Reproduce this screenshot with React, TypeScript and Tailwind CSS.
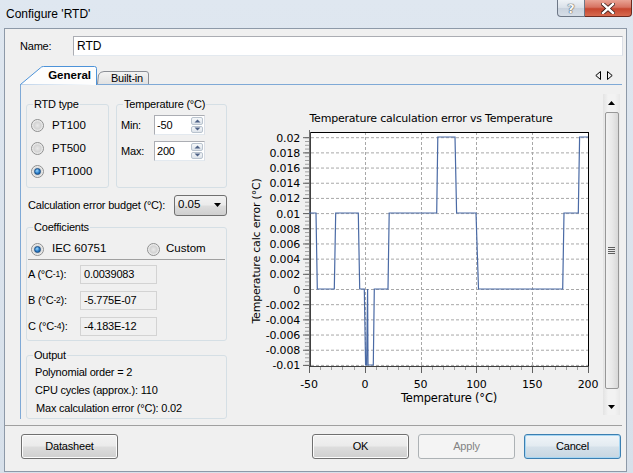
import React from "react";

const UI = { fontFamily: '"Liberation Sans", Arial, sans-serif' };
const CH = '"DejaVu Sans", Verdana, sans-serif';

function Radio({ checked }: { checked?: boolean }) {
  return (
    <span className="inline-flex w-[13px] h-[13px] shrink-0 items-center justify-center rounded-full border border-[#8e8f8f] bg-[radial-gradient(circle_at_50%_50%,#e9e9e9_0%,#d3d3d3_45%,#f6f6f6_75%)]">
      {checked && (
        <span className="w-[7px] h-[7px] rounded-full border border-[#1a4f86] bg-[radial-gradient(circle_at_40%_35%,#9ad8ff_0%,#2a7cc8_55%,#0e4d8c_100%)]" />
      )}
    </span>
  );
}

function SpinBtn({ up }: { up?: boolean }) {
  return (
    <div className="flex-1 flex items-center justify-center rounded-[2px] border border-[#b9c3ce] bg-gradient-to-b from-[#f6f8fa] to-[#dde3ea]">
      <svg width="7" height="4" viewBox="0 0 7 4">
        {up ? <path d="M0.5 3.5 L3.5 0.5 L6.5 3.5 Z" fill="#4d6185" /> : <path d="M0.5 0.5 L3.5 3.5 L6.5 0.5 Z" fill="#4d6185" />}
      </svg>
    </div>
  );
}

function Spin({ value }: { value: string }) {
  return (
    <div className="flex w-[51px] h-[20px] border border-[#abadb3] border-b-[#e3e9ef] border-r-[#dbdfe6] bg-white">
      <span className="flex-1 pl-[2px] leading-[18px]">{value}</span>
      <div className="w-[14px] flex flex-col gap-[1px] p-[1px]">
        <SpinBtn up />
        <SpinBtn />
      </div>
    </div>
  );
}

function ReadBox({ value }: { value: string }) {
  return (
    <div className="w-[77px] h-[19px] border border-[#d3d3d3] bg-[#f0f0f0] pl-[3px] leading-[17px]">{value}</div>
  );
}

function Btn({ label, disabled, def }: { label: string; disabled?: boolean; def?: boolean }) {
  const base = "w-[97px] h-[25px] rounded-[3px] border flex items-center justify-center";
  if (disabled)
    return <div className={base + " border-[#adb2b5] bg-[#f4f4f4] text-[#838383]"}>{label}</div>;
  if (def)
    return (
      <div className={base + " border-[#3c7fb1] bg-[linear-gradient(to_bottom,#f0f5f9_0%,#e3ebf1_48%,#d5e1ea_52%,#c8d6e1_100%)] shadow-[inset_0_0_0_1px_#a6d6f3]"}>
        {label}
      </div>
    );
  return (
    <div className={base + " border-[#707070] bg-[linear-gradient(to_bottom,#f2f2f2_0%,#ebebeb_48%,#dddddd_52%,#cfcfcf_100%)] shadow-[inset_0_0_0_1px_#fcfcfc]"}>
      {label}
    </div>
  );
}

function Group({ title, className, children }: { title: string; className?: string; children: React.ReactNode }) {
  return (
    <fieldset className={"border border-[#d5dfe5] rounded-[3px] " + (className || "")}>
      <legend className="ml-[6px] px-[1px] leading-[13px]">{title}</legend>
      {children}
    </fieldset>
  );
}

// chart helpers (page coords)
const X = (t: number) => 309 + (t + 50) * 1.116;
const Y = (v: number) => 290 - v * 7590;

function Chart() {
  const yTicks: number[] = [];
  for (let k = 0; k <= 15; k++) yTicks.push(0.02 - k * 0.002);
  const minorY: number[] = [];
  for (let k = 0; k <= 60; k++) minorY.push(0.02 - k * 0.0005);
  const xMajor = [-50, 0, 50, 100, 150, 200];
  const minorX: number[] = [];
  for (let t = -50; t <= 200; t += 10) minorX.push(t);
  const fmt = (v: number) => {
    const r = Math.round(v * 1000) / 1000;
    if (Math.abs(r) < 1e-9) return "0";
    return r.toString();
  };
  const pts: [number, number][] = [
    [309, 214], [316, 214], [317.3, 290], [334.3, 290], [335.7, 214], [358.3, 214], [359.7, 290],
    [364.3, 290], [365.6, 366], [366.6, 366], [367.6, 290], [368, 366], [373.3, 366], [374.3, 290],
    [388, 290], [389.2, 214], [436.7, 214], [437.8, 138], [455, 138], [456.6, 214], [476, 214],
    [478.5, 290], [562.7, 290], [564, 214], [578.3, 214], [579.6, 138], [588, 138],
  ];
  return (
    <svg width="364" height="322" viewBox="236 95 364 322" className="block">
      <text x="431" y="123" textAnchor="middle" fontFamily={CH} fontSize="11" fill="#000">
        Temperature calculation error vs Temperature
      </text>
      <rect x="309" y="133" width="279" height="234" fill="#fff" />
      {yTicks.map((v, i) => (
        <line key={"gy" + i} x1="311" x2="588" y1={Y(v) + 0.5} y2={Y(v) + 0.5} stroke="#a8a8a8" strokeDasharray="3 2" strokeWidth="1" />
      ))}
      {[0, 50, 100, 150].map((t) => (
        <line key={"gx" + t} x1={Math.round(X(t)) + 0.5} x2={Math.round(X(t)) + 0.5} y1="133" y2="367" stroke="#a8a8a8" strokeDasharray="3 2" strokeWidth="1" />
      ))}
      <line x1="309" x2="588.5" y1="133.5" y2="133.5" stroke="#000" />
      <line x1="588.5" x2="588.5" y1="133" y2="367" stroke="#000" />
      {minorY.map((v, i) => (
        <line key={"my" + i} x1="305" x2="309" y1={Y(v) + 0.5} y2={Y(v) + 0.5} stroke="#a0a0a0" />
      ))}
      {yTicks.map((v, i) => (
        <line key={"ty" + i} x1="303" x2="309" y1={Y(v) + 0.5} y2={Y(v) + 0.5} stroke="#606060" />
      ))}
      <line x1="309.5" x2="309.5" y1="131" y2="368" stroke="#707070" strokeWidth="1" />
      <line x1="310.5" x2="310.5" y1="133" y2="367" stroke="#404040" strokeWidth="1" />
      {minorX.map((t) => (
        <line key={"mx" + t} x1={Math.round(X(t)) + 0.5} x2={Math.round(X(t)) + 0.5} y1="368" y2="371" stroke="#a0a0a0" />
      ))}
      {xMajor.map((t) => (
        <line key={"tx" + t} x1={Math.round(X(t)) + 0.5} x2={Math.round(X(t)) + 0.5} y1="368" y2="374" stroke="#606060" />
      ))}
      <line x1="309" x2="589" y1="367.5" y2="367.5" stroke="#404040" />
      <polyline points={pts.map((p) => p.join(",")).join(" ")} fill="none" stroke="#4a6aa5" strokeWidth="1.2" />
      {yTicks.map((v, i) => (
        <text key={"ly" + i} x="300" y={Y(v) + 4.5} textAnchor="end" fontFamily={CH} fontSize="11" fill="#000">
          {fmt(v)}
        </text>
      ))}
      {xMajor.map((t) => (
        <text key={"lx" + t} x={X(t)} y="389" textAnchor="middle" fontFamily={CH} fontSize="11" fill="#000">
          {t}
        </text>
      ))}
      <text x="449" y="403" textAnchor="middle" fontFamily={CH} fontSize="11.5" fill="#000">
        Temperature (°C)
      </text>
      <text transform="translate(260 252) rotate(-90)" textAnchor="middle" fontFamily={CH} fontSize="11" fill="#000">
        Temperature calc error (°C)
      </text>
    </svg>
  );
}

function Scrollbar() {
  return (
    <div className="w-[17px] h-[321px] bg-[linear-gradient(to_right,#e3e3e3,#f2f2f2_30%,#f2f2f2_70%,#e8e8e8)] flex flex-col items-center">
      <div className="h-[17px] w-full flex items-center justify-center">
        <svg width="7" height="4" viewBox="0 0 7 4"><path d="M0 4 L3.5 0 L7 4 Z" fill="#000" /></svg>
      </div>
      <div className="mt-[1px] w-[14px] h-[277px] rounded-[2px] border border-[#979797] bg-[linear-gradient(to_right,#f2f2f2,#e9e9e9_50%,#d8d8d8)] flex items-center justify-center">
        <div className="flex flex-col gap-[1px]">
          <div className="w-[7px] h-[1px] bg-[#5e5e5e]" />
          <div className="w-[7px] h-[1px] bg-[#5e5e5e]" />
          <div className="w-[7px] h-[1px] bg-[#5e5e5e]" />
          <div className="w-[7px] h-[1px] bg-[#5e5e5e]" />
        </div>
      </div>
      <div className="mt-auto h-[17px] w-full flex items-center justify-center">
        <svg width="7" height="4" viewBox="0 0 7 4"><path d="M0 0 L3.5 4 L7 0 Z" fill="#000" /></svg>
      </div>
    </div>
  );
}

export default function App() {
  return (
    <div
      className="w-[633px] h-[473px] overflow-hidden flex flex-col bg-[linear-gradient(to_bottom,#dfe7f0,#d7e0ea)] text-[11px] tracking-[-0.2px] text-black"
      style={UI}
    >
      {/* title bar */}
      <div className="h-[28px] shrink-0 flex items-start">
        <span className="pl-[6px] pt-[6px] text-[12px] tracking-normal leading-[16px]">Configure 'RTD'</span>
        <div className="ml-auto mr-[1px] flex">
          <div className="w-[28px] h-[17px] rounded-bl-[4px] border border-t-0 border-[#6d7786] bg-[linear-gradient(to_bottom,#eef2f6,#d9e0e8_50%,#c9d2dd_51%,#d6dee7)] flex items-center justify-center">
            <span className="text-[13px] leading-none font-bold text-[#f7f9fb] [text-shadow:0_0_1px_#333,0_0_1px_#333]" style={{ fontFamily: '"DejaVu Sans", sans-serif' }}>?</span>
          </div>
          <div className="w-[47px] h-[17px] rounded-br-[4px] border border-t-0 border-l-0 border-[#6b2a20] bg-[linear-gradient(to_bottom,#e9a395,#d77362_45%,#c6462f_55%,#d76a4f)] flex items-center justify-center">
            <svg width="14" height="11" viewBox="0 0 14 11">
              <path d="M2 1 L12 10 M12 1 L2 10" stroke="#3a1a16" strokeWidth="4" strokeLinecap="square" />
              <path d="M2 1 L12 10 M12 1 L2 10" stroke="#ffffff" strokeWidth="2.4" strokeLinecap="square" />
            </svg>
          </div>
        </div>
      </div>

      {/* client area */}
      <div className="ml-[4px] w-[623px] h-[444px] shrink-0 border border-[#8d99a8] bg-[#f0f0f0] flex flex-col">
        <div className="mt-[7px] h-[20px] flex items-center pl-[15px]">
          <span className="w-[53px]">Name:</span>
          <div className="w-[550px] h-[20px] border border-[#abadb3] border-b-[#e3e9ef] border-r-[#dbdfe6] bg-white pl-[3px] leading-[18px] text-[12px] tracking-normal">RTD</div>
        </div>

        <div className="mt-[10px] h-[18px] flex items-end pl-[15px] pr-[5px]">
          <div className="relative w-[77px] h-[18px] flex items-center justify-end pr-[6px]">
            <svg className="absolute left-0 top-0" width="78" height="19" viewBox="0 0 78 19">
              <path d="M0.5 18.5 L20.5 1.8 Q21.5 0.5 23.5 0.5 L74.5 0.5 Q76.5 0.5 76.5 2.5 L76.5 19" fill="#fdfdfd" stroke="#4d93d9" />
            </svg>
            <span className="relative font-bold text-[11.5px] tracking-normal pt-[1px]">General</span>
          </div>
          <div className="relative w-[52px] h-[13px] flex items-center justify-center">
            <svg className="absolute left-0 top-0" width="53" height="14" viewBox="0 0 53 14">
              <path d="M0.5 13 L1.5 4 Q3 0.5 7 0.5 L49 0.5 Q51.5 0.5 51.5 3 L51.5 13" fill="url(#bt)" stroke="#8b8e95" />
              <defs>
                <linearGradient id="bt" x1="0" y1="0" x2="0" y2="1">
                  <stop offset="0" stopColor="#f4f4f4" />
                  <stop offset="1" stopColor="#e1e1e1" />
                </linearGradient>
              </defs>
            </svg>
            <span className="relative pl-[8px] pt-[1px]">Built-in</span>
          </div>
          <div className="ml-auto mb-[4px] flex gap-[6px] pr-[8px]">
            <svg width="6" height="9" viewBox="0 0 6 9"><path d="M5.5 0.5 L0.8 4.5 L5.5 8.5 Z" fill="none" stroke="#000" /></svg>
            <svg width="6" height="9" viewBox="0 0 6 9"><path d="M0.5 0.5 L5.2 4.5 L0.5 8.5 Z" fill="none" stroke="#000" /></svg>
          </div>
        </div>

        <div className="ml-[15px] w-[602px] h-[335px] border-l border-t border-[#7fa9d6] overflow-hidden flex">
          <div className="ml-[5px] w-[201px] pt-[13px] flex flex-col">
            <div className="flex gap-[7px] items-stretch">
              <Group title="RTD type" className="w-[83px] pb-[4px]">
                <div className="mt-[3px] flex flex-col pl-[4px]">
                  {[
                    ["PT100", false],
                    ["PT500", false],
                    ["PT1000", true],
                  ].map(([l, c]) => (
                    <div key={l as string} className="h-[23px] flex items-center gap-[8px]">
                      <Radio checked={c as boolean} />
                      <span className="text-[11.5px] tracking-normal">{l as string}</span>
                    </div>
                  ))}
                </div>
              </Group>
              <Group title="Temperature (°C)" className="w-[111px]">
                <div className="mt-[4px] flex flex-col gap-[6px] pl-[4px]">
                  <div className="flex items-center">
                    <span className="w-[33px]">Min:</span>
                    <Spin value="-50" />
                  </div>
                  <div className="flex items-center">
                    <span className="w-[33px]">Max:</span>
                    <Spin value="200" />
                  </div>
                </div>
              </Group>
            </div>

            <div className="mt-[7px] h-[20px] flex items-center">
              <span className="pl-[2px] w-[148px]">Calculation error budget (°C):</span>
              <div className="w-[53px] h-[21px] rounded-[3px] border border-[#707070] bg-[linear-gradient(to_bottom,#f2f2f2_0%,#ebebeb_48%,#dddddd_52%,#cfcfcf_100%)] flex items-center pl-[3px] pr-[5px]">
                <span className="flex-1 text-[11.5px] tracking-normal">0.05</span>
                <svg width="7" height="4" viewBox="0 0 7 4"><path d="M0 0 L7 0 L3.5 4 Z" fill="#000" /></svg>
              </div>
            </div>

            <Group title="Coefficients" className="mt-[6px] w-[201px] pb-[4px]">
              <div className="mt-[5px] h-[20px] flex items-center pl-[4px]">
                <span className="w-[116px] flex items-center gap-[8px]">
                  <Radio checked />
                  <span className="text-[11.5px] tracking-normal">IEC 60751</span>
                </span>
                <span className="flex items-center gap-[6px]">
                  <Radio />
                  <span className="text-[11.5px] tracking-normal">Custom</span>
                </span>
              </div>
              <div className="mx-[1px] h-[1px] bg-[#a0a0a0]" />
              <div className="mt-[5px] flex flex-col gap-[7px] pl-[1px]">
                {[
                  ["A", "-1", "0.0039083"],
                  ["B", "-2", "-5.775E-07"],
                  ["C", "-4", "-4.183E-12"],
                ].map(([n, e, v]) => (
                  <div key={n} className="flex items-center">
                    <span className="w-[52px]">
                      {n} (°C<sup className="text-[8.5px] relative -top-[1px]">{e}</sup>):
                    </span>
                    <ReadBox value={v} />
                  </div>
                ))}
              </div>
            </Group>

            <Group title="Output" className="mt-[8px] w-[201px] h-[80px]">
              <div className="mt-[1px] pl-[8px] flex flex-col">
                <div className="h-[18px] leading-[18px]">Polynomial order = 2</div>
                <div className="h-[18px] leading-[18px]">CPU cycles (approx.): 110</div>
                <div className="h-[18px] leading-[18px] pl-[1px]">Max calculation error (°C): 0.02</div>
              </div>
            </Group>
          </div>

          <div className="ml-[9px] pt-[9px]">
            <Chart />
          </div>

          <div className="ml-[3px] pt-[9px]">
            <Scrollbar />
          </div>
        </div>

        <div className="mt-[6px] w-[617px] h-[1px] bg-[#a0a0a0]" />

        <div className="mt-[8px] flex items-center pl-[16px]">
          <Btn label="Datasheet" />
          <div className="ml-auto mr-[5px] flex gap-[9px]">
            <Btn label="OK" />
            <Btn label="Apply" disabled />
            <Btn label="Cancel" def />
          </div>
        </div>
      </div>
    </div>
  );
}
